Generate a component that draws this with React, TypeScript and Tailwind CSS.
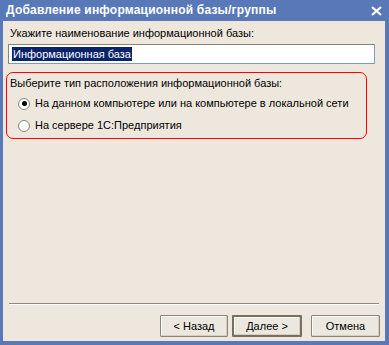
export default function App() {
  const font = { fontFamily: "Tahoma, 'Liberation Sans', 'DejaVu Sans', sans-serif" };
  return (
    <div
      className="w-[389px] h-[345px] bg-[#5878b8] flex flex-col text-[11px] leading-[13px] text-black"
      style={font}
    >
      {/* Title bar */}
      <div className="h-[21px] flex items-center justify-between pl-[6px] pr-[6px] text-white font-bold text-[12px]">
        <span className="tracking-[0.2px]">Добавление информационной базы/группы</span>
        <svg width="11" height="10" viewBox="0 0 11 10" className="mr-[1px]">
          <path d="M1 1 L10 9 M10 1 L1 9" stroke="white" strokeWidth="2.2" />
        </svg>
      </div>

      {/* Body */}
      <div className="flex-1 ml-[3px] mr-[4px] mb-[4px] bg-[#eee7dd] flex flex-col">
        <div className="pl-[7px] pt-[6px]">Укажите наименование информационной базы:</div>
        <div className="ml-[5px] mt-[4px] w-[367px] h-[20px] bg-white border border-[#7f9db9] border-t-[#8a8570] border-l-[#8a8570] flex items-center pl-[3px]">
          <span className="bg-[#0a246a] text-white px-[1px] leading-[14px]">Информационная база</span>
        </div>

        {/* Red group */}
        <div className="ml-[3px] mt-[8px] w-[361px] h-[67px] border border-[#ff0000] rounded-[7px] flex flex-col">
          <div className="pl-[3px] pt-[4px]">Выберите тип расположения информационной базы:</div>
          <div className="flex items-center mt-[7px] pl-[11px] gap-[5px]">
            <span className="w-[12px] h-[12px] rounded-full border border-[#888678] bg-white flex items-center justify-center">
              <span className="w-[5px] h-[5px] rounded-full bg-black" />
            </span>
            <span>На данном компьютере или на компьютере в локальной сети</span>
          </div>
          <div className="flex items-center mt-[9px] pl-[11px] gap-[5px]">
            <span className="w-[12px] h-[12px] rounded-full border border-[#888678] bg-white" />
            <span>На сервере 1С:Предприятия</span>
          </div>
        </div>

        <div className="flex-1" />

        {/* Separator */}
        <div className="ml-[6px] mr-[6px] h-[2px] border-t border-[#8f8b7c] border-b border-b-white" />

        {/* Buttons */}
        <div className="flex justify-end gap-[4px] pr-[5px] mt-[10px] mb-[4px]">
          <button className="w-[68px] h-[22px] border border-[#8a8676] bg-[#ede8df] rounded-[1px] shadow-[inset_-1px_-1px_0_#d4cfc2,inset_1px_1px_0_#fbfaf7]">
            &lt; Назад
          </button>
          <button className="w-[70px] h-[22px] border-2 border-[#75705f] bg-[#ede8df] rounded-[1px] shadow-[inset_-1px_-1px_0_#d4cfc2,inset_1px_1px_0_#fbfaf7]">
            Далее &gt;
          </button>
          <button className="ml-[5px] w-[69px] h-[22px] border border-[#8a8676] bg-[#ede8df] rounded-[1px] shadow-[inset_-1px_-1px_0_#d4cfc2,inset_1px_1px_0_#fbfaf7]">
            Отмена
          </button>
        </div>
      </div>
    </div>
  );
}
